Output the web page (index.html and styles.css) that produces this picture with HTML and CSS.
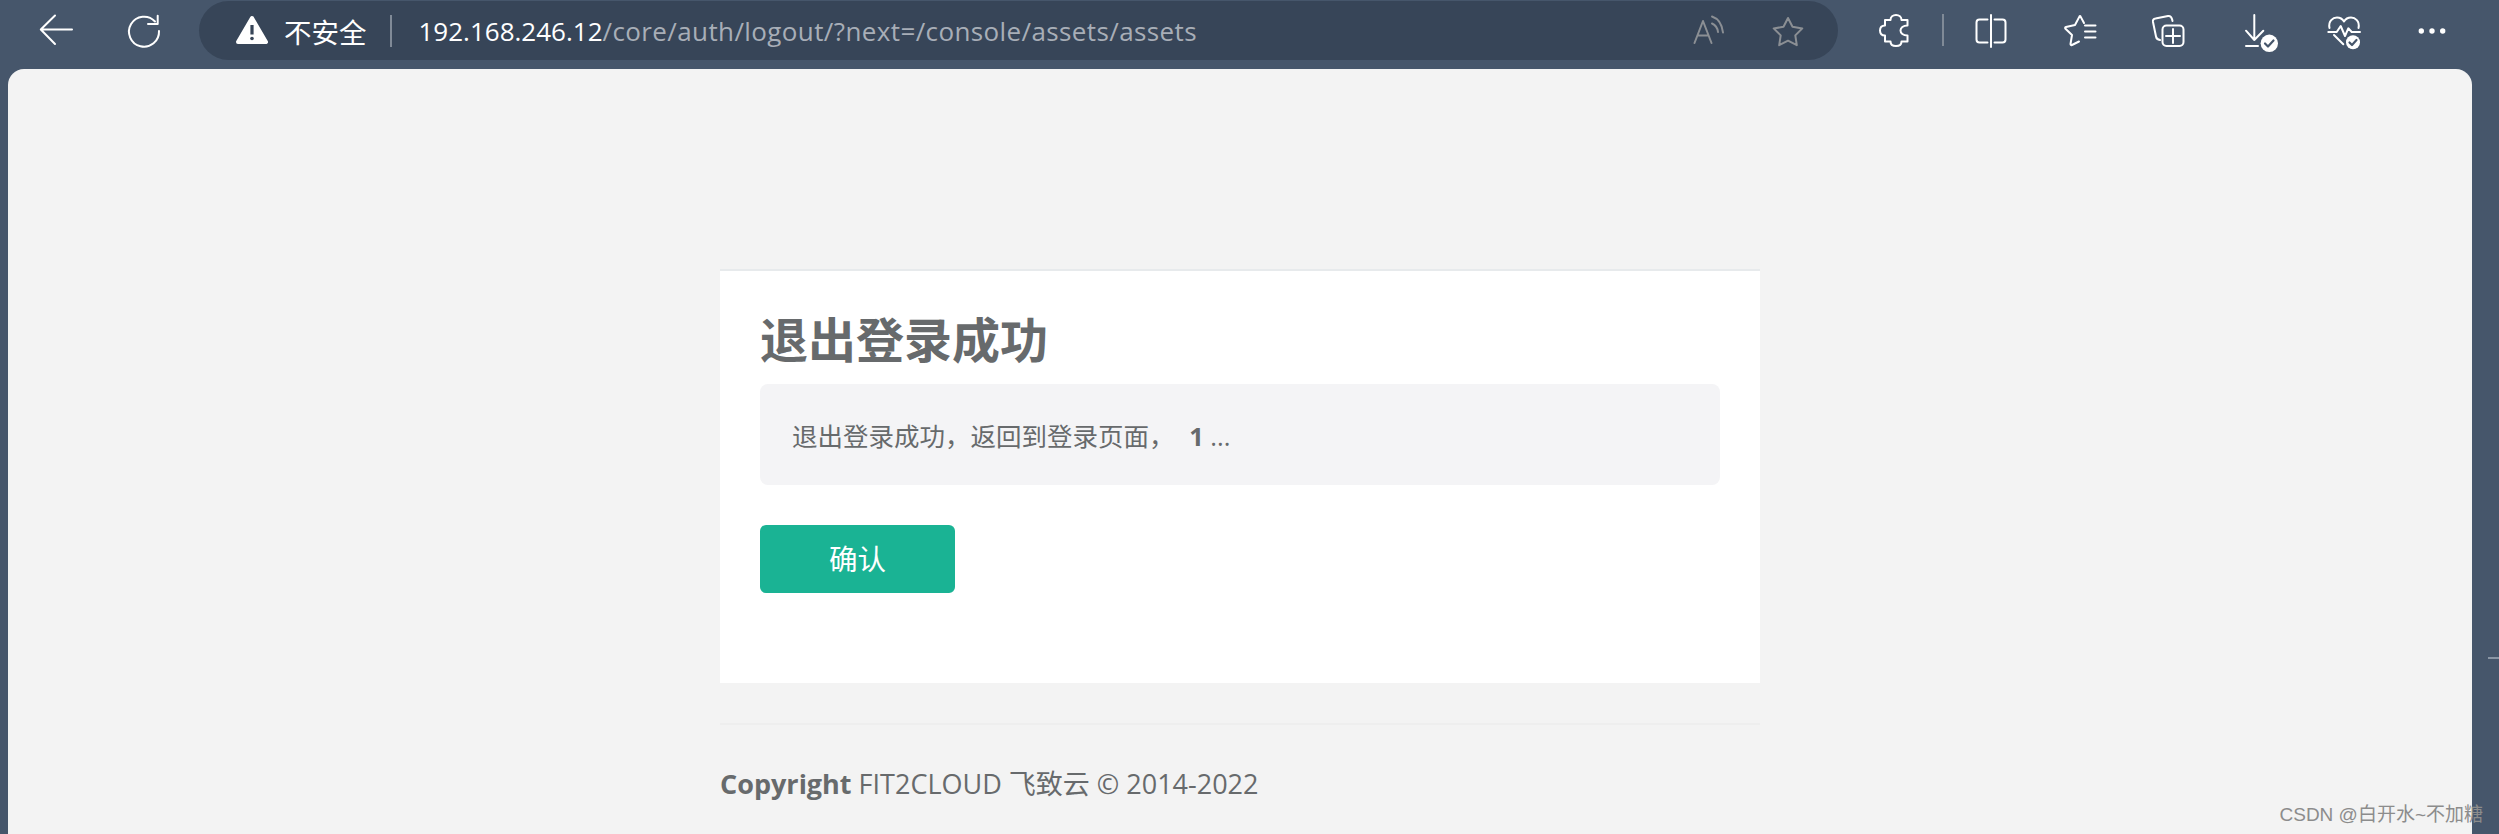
FILE: index.html
```html
<!DOCTYPE html>
<html lang="zh-CN">
<head>
    <meta charset="UTF-8">
    <meta name="viewport" content="width=device-width, initial-scale=1.0">
    <title>退出登录成功</title>
    <link rel="stylesheet" href="styles.css">
</head>
<body>
    <header class="toolbar">
        <svg class="icon nav-back" viewBox="0 0 32 32"><path d="M32 15.5H1M15 1.5L.8 15.5 15 30"/></svg>
        <svg class="icon nav-reload" viewBox="0 0 32 32"><path d="M27 7.5A15 15 0 1 0 31 17M29.7 1.7V10H20"/></svg>

        <div class="address-bar">
            <svg class="icon icon-warning" viewBox="0 0 32 32">
                <path class="warning-shape" d="M16 3L30 27H2Z"/>
                <rect class="warning-mark" x="14.4" y="10" width="3.2" height="9.5"/>
                <circle class="warning-mark" cx="16" cy="23.5" r="1.8"/>
            </svg>
            <span class="security-label">不安全</span>
            <span class="bar-divider"></span>
            <span class="url"><span class="url-host">192.168.246.12</span><span class="url-path">/core/auth/logout/?next=/console/assets/assets</span></span>
            <svg class="icon icon-muted icon-read" viewBox="0 0 32 32"><path d="M2.5 28L11 6l8.5 22M5.5 20.5H16.5M20 8.5C23.5 10 25.5 13 26 17M20 1.5C26 3.5 30 9 31 17.5"/></svg>
            <svg class="icon icon-muted" viewBox="0 0 32 32"><path d="M16 3l4.5 8.8 9.8 1.6-7 7 1.5 9.8L16 25.7l-8.8 4.5 1.5-9.8-7-7 9.8-1.6Z"/></svg>
        </div>

        <svg class="icon icon-puzzle" viewBox="0 0 32 32"><path d="M7 6H12.5C12.5 3 15 1 18 1S23.5 3 23.5 6H29.5V11.5C25 11.5 22.5 14 22.5 16.5S25 21.5 29.5 21.5V27.5H23.5C23.5 30.5 21 32 18 32S12.5 30.5 12.5 27.5H7V21.5C4 21.5 2 19.5 2 16.5S4 11.5 7 11.5Z"/></svg>
        <span class="tool-divider"></span>
        <svg class="icon icon-split" viewBox="0 0 32 32"><path d="M12.5 5.5H4.5a3 3 0 0 0-3 3V25.5a3 3 0 0 0 3 3H12.5M16 1V33M19.5 5.5H27.5a3 3 0 0 1 3 3V25.5a3 3 0 0 1-3 3H19.5"/></svg>
        <svg class="icon icon-tool" viewBox="0 0 32 32"><path d="M20 9L16.6 2.6Q16 1.6 15.4 2.6L11 11 2 13Q.5 13.5 1.5 14.8L8 21 6.5 30Q6.5 31.5 8 31L15 27.5M21 11.5H31.5M21 17.5H31.5M21 23.5H31.5"/></svg>
        <svg class="icon icon-tool" viewBox="0 0 32 32">
            <path d="M8 26Q4.5 25.5 4 22.5L1 8Q.5 5 3.5 4.5L16 2Q19 1.5 20 5L20.5 7"/>
            <rect x="10.5" y="11.5" width="21" height="20.5" rx="4"/>
            <path d="M21 15V29M14 22H28"/>
        </svg>
        <svg class="icon icon-tool" viewBox="0 0 32 32">
            <path d="M14.3 1V26M6 16.7L14.3 26 23.3 16.7M6 32H18"/>
            <circle class="badge" cx="29.3" cy="29.3" r="8.7"/>
            <path class="badge-check" d="M25 29.5L28 32.5 33.5 26.5"/>
        </svg>
        <svg class="icon icon-tool" viewBox="0 0 32 32">
            <path d="M1.5 14C0 7 5 3.5 9 3.5 12 3.5 14.5 5 16 7.5 17.5 5 20 3.5 23 3.5 27 3.5 32 7 30.5 14M.3 18H8.7L12.7 12 17 22 20.3 14.3 23.7 18H32M6 21L15.3 30.3"/>
            <circle class="badge" cx="25" cy="28.3" r="7"/>
            <path class="badge-check" d="M21.5 28.5L24 31 28.5 26"/>
        </svg>
        <svg class="icon icon-tool" viewBox="0 0 32 32">
            <circle class="badge" cx="5.3" cy="17" r="2.7"/>
            <circle class="badge" cx="16" cy="17" r="2.7"/>
            <circle class="badge" cx="26.7" cy="17" r="2.7"/>
        </svg>
    </header>

    <main class="page">
        <div class="content">
            <section class="card">
                <h1 class="card-title">退出登录成功</h1>
                <div class="notice">退出登录成功，返回到登录页面， <strong class="countdown">1</strong> ...</div>
                <a class="btn-confirm" href="#">确认</a>
            </section>
            <footer class="footer"><strong>Copyright</strong> FIT2CLOUD 飞致云 © 2014-2022</footer>
        </div>
    </main>

    <span class="edge-mark"></span>
    <span class="watermark">CSDN @白开水~不加糖</span>
</body>
</html>
```

FILE: styles.css
```css
html, body {
    height: 100%;
}

body {
    margin: 0;
    display: flex;
    flex-direction: column;
    overflow: hidden;
    background-color: #46566b;
    color: #676a6c;
    font-family: "Open Sans", "Noto Sans CJK SC", sans-serif;
}

.toolbar {
    display: flex;
    align-items: center;
    flex: none;
    height: 60px;
    padding: 0 51px 0 40px;
    margin-bottom: 9px;
    gap: 56px;
}

.icon {
    flex: none;
    width: 32px;
    height: 32px;
    overflow: visible;
    fill: none;
    stroke: #fff;
    stroke-width: 2;
    stroke-linecap: round;
    stroke-linejoin: round;
}

.address-bar {
    display: flex;
    align-items: center;
    flex: 1;
    align-self: stretch;
    margin: 1px -16px 0 -17px;
    padding: 0 34px 0 37px;
    border-radius: 30px;
    background-color: #374558;
    color: #a8aeb7;
    font-size: 26px;
    white-space: nowrap;
}

.icon-warning {
    margin-right: 16px;
}

.warning-shape {
    fill: #fff;
    stroke-width: 4;
}

.warning-mark {
    fill: #374558;
    stroke: none;
}

.security-label {
    color: #fff;
    font-size: 27.5px;
}

.bar-divider,
.tool-divider {
    flex: none;
    width: 2px;
    height: 32px;
    background-color: #808a97;
}

.bar-divider {
    margin: 0 27px 0 23px;
}

.tool-divider {
    margin: 0 -25px 0 -24px;
}

.icon-split {
    margin-right: 1px;
}

.url {
    flex: 1;
}

.url-host {
    color: #fff;
}

.url-path {
    letter-spacing: 0.39px;
}

.icon-muted {
    stroke: #8b8f94;
}

.icon-read {
    margin-right: 48px;
}

.badge {
    fill: #fff;
    stroke: none;
}

.badge-check {
    stroke: #46566b;
    stroke-width: 2.2;
}

.page {
    flex: 1;
    margin: 0 27px 0 8px;
    border-radius: 16px 16px 0 0;
    background-color: #f3f3f3;
}

.content {
    width: 1040px;
    margin: 0 auto;
    padding-top: 200px;
}

.card {
    height: 412px;
    padding: 0 40px;
    border-top: 2px solid #e7eaec;
    background-color: #fff;
}

.card-title {
    margin: 0;
    padding-top: 33px;
    color: #676a6c;
    font-size: 48px;
    font-weight: 700;
    line-height: 72px;
}

.notice {
    height: 101px;
    margin-top: 8px;
    padding-left: 32px;
    border-radius: 8px;
    background-color: #f4f4f6;
    font-size: 25.5px;
    line-height: 105px;
}

.countdown {
    margin-left: 8px;
}

.btn-confirm {
    display: block;
    width: 195px;
    height: 68px;
    margin-top: 40px;
    border-radius: 6px;
    background-color: #1ab394;
    color: #fff;
    font-size: 28.5px;
    line-height: 68px;
    text-align: center;
    text-decoration: none;
}

.footer {
    margin-top: 40px;
    padding-top: 39px;
    border-top: 2px solid #eeeeee;
    font-size: 27px;
    line-height: 40px;
}

.edge-mark {
    position: absolute;
    top: 657px;
    left: 2488px;
    width: 11px;
    height: 2px;
    background-color: #8a96a5;
}

.watermark {
    position: absolute;
    right: 16px;
    bottom: 9px;
    color: #8c8c8c;
    font-family: "Liberation Sans", "Noto Sans CJK SC", sans-serif;
    font-size: 19px;
    line-height: 20px;
    white-space: nowrap;
}
```
